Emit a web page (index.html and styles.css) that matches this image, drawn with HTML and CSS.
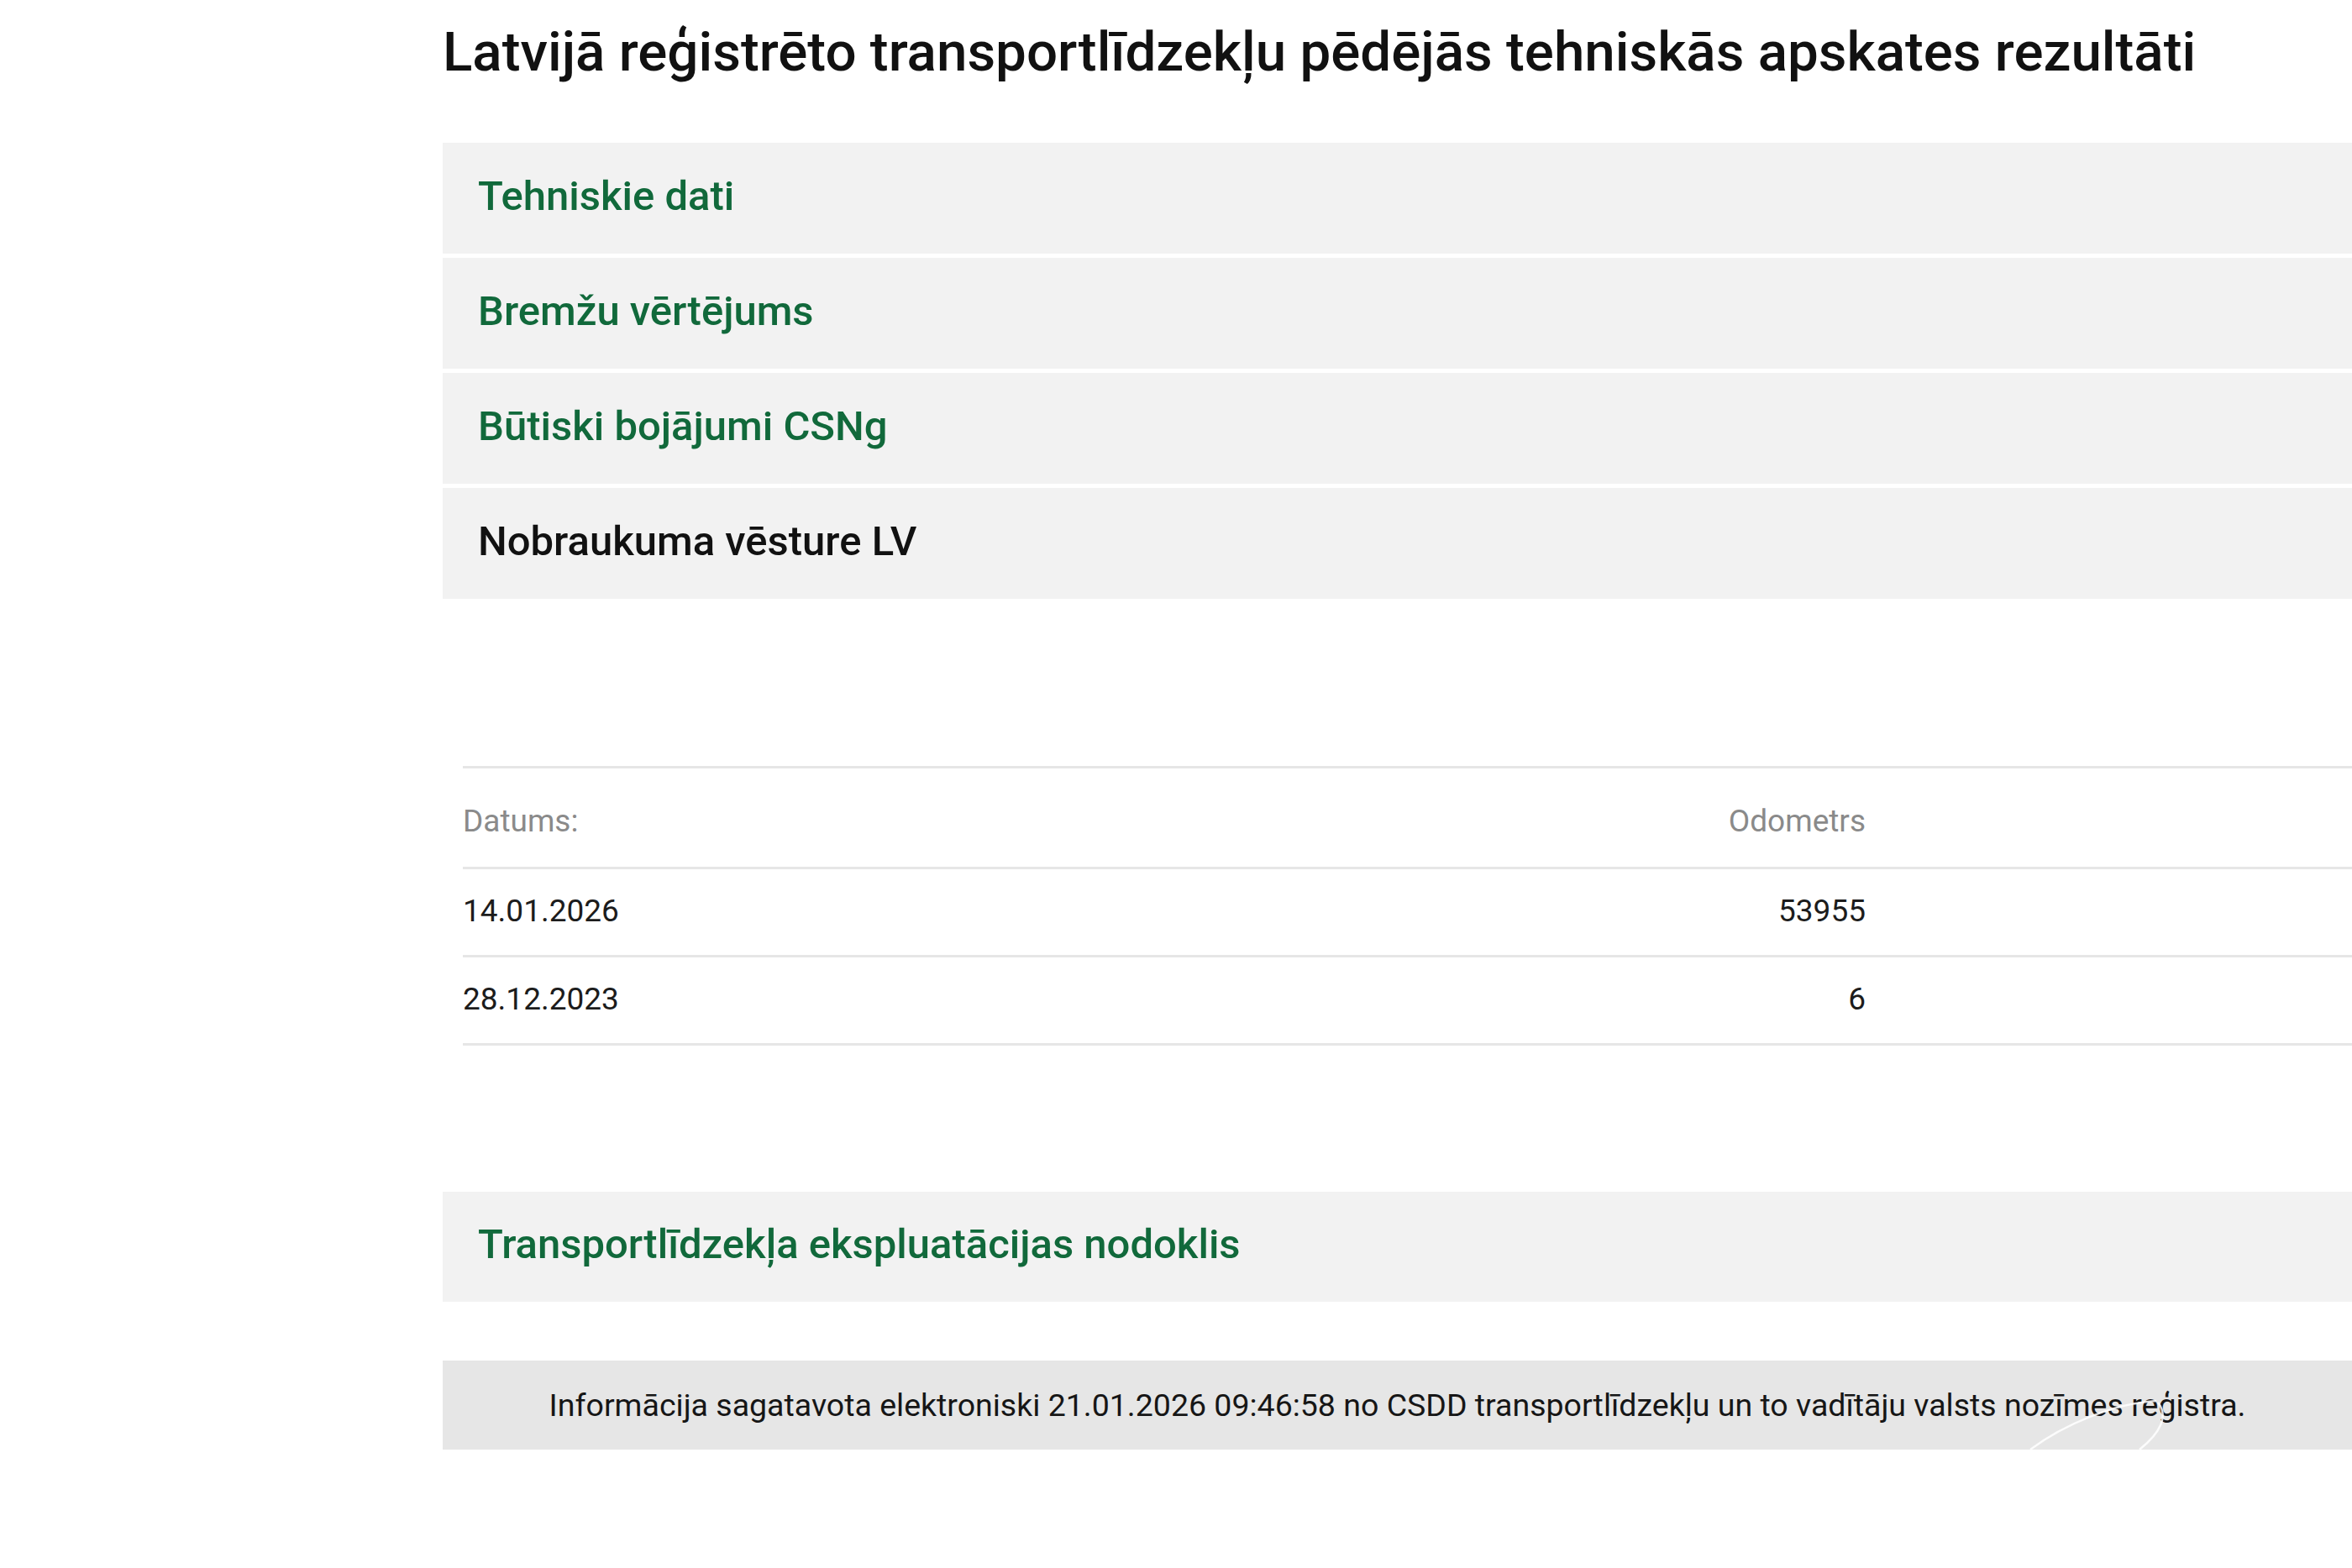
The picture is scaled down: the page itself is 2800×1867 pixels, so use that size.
FILE: index.html
```html
<!DOCTYPE html>
<html lang="lv">
<head>
<meta charset="utf-8">
<title>Tehniskās apskates rezultāti</title>
<link rel="stylesheet" href="styles.css">
</head>
<body>
<main class="container">
  <h1 class="page-title">Latvijā reģistrēto transportlīdzekļu pēdējās tehniskās apskates rezultāti</h1>
  <div class="accordion">
    <div class="acc-item"><span class="acc-label">Tehniskie dati</span></div>
    <div class="acc-item"><span class="acc-label">Bremžu vērtējums</span></div>
    <div class="acc-item"><span class="acc-label">Būtiski bojājumi CSNg</span></div>
    <div class="acc-item acc-open"><span class="acc-label">Nobraukuma vēsture LV</span></div>
  </div>
  <section class="history">
    <div class="hist-table">
      <div class="hist-row hist-head">
        <div class="c-date">Datums:</div>
        <div class="c-odo">Odometrs</div>
        <div class="c-rest"></div>
      </div>
      <div class="hist-row">
        <div class="c-date">14.01.2026</div>
        <div class="c-odo">53955</div>
        <div class="c-rest"></div>
      </div>
      <div class="hist-row">
        <div class="c-date">28.12.2023</div>
        <div class="c-odo">6</div>
        <div class="c-rest"></div>
      </div>
    </div>
  </section>
  <div class="acc-item acc-tax"><span class="acc-label">Transportlīdzekļa ekspluatācijas nodoklis</span></div>
  <footer class="info-box">
    <span class="info-text">Informācija sagatavota elektroniski 21.01.2026 09:46:58 no CSDD transportlīdzekļu un to vadītāju valsts nozīmes reģistra.</span>
    <svg class="watermark" width="200" height="60" viewBox="0 0 200 60" aria-hidden="true">
      <path d="M20 60 C 60 30, 120 5, 170 2" fill="none" stroke="#ffffff" stroke-width="2.5" opacity="0.85"/>
      <path d="M150 60 C 175 40, 185 20, 172 4" fill="none" stroke="#ffffff" stroke-width="2.5" opacity="0.85"/>
    </svg>
  </footer>
</main>
</body>
</html>
```

FILE: styles.css
```css
html, body {
  margin: 0;
  padding: 0;
  background: #ffffff;
  overflow: hidden;
}
body {
  font-family: Roboto, "Liberation Sans", Arial, sans-serif;
  color: #111111;
}
.container {
  margin-left: 527px;
  width: 2273px;
}
.page-title {
  margin: 22px 0 68px 0;
  font-size: 65.5px;
  line-height: 80px;
  font-weight: 500;
  color: #111111;
  white-space: nowrap;
}
.accordion {
  display: flex;
  flex-direction: column;
  gap: 5px;
}
.acc-item {
  height: 132px;
  box-sizing: border-box;
  background: #f2f2f2;
  display: flex;
  align-items: center;
  padding: 0 0 6px 42px;
}
.acc-label {
  font-size: 49px;
  font-weight: 500;
  color: #11693b;
  white-space: nowrap;
}
.acc-open .acc-label {
  color: #111111;
}
.history {
  padding: 199px 0 0 24px;
}
.hist-table {
  border-top: 3px solid #e6e6e6;
}
.hist-row {
  display: grid;
  grid-template-columns: 1400px 270px 1fr;
  align-items: center;
  height: 105px;
  box-sizing: border-box;
  border-bottom: 3px solid #e6e6e6;
  padding-bottom: 3px;
  font-size: 37px;
  color: #1c1c1c;
}
.hist-head {
  height: 120px;
  padding-top: 8px;
  padding-bottom: 0;
  font-size: 37px;
  color: #8a8a8a;
}
.c-odo {
  text-align: right;
}
.acc-tax {
  margin-top: 174px;
  height: 131px;
}
.info-box {
  position: relative;
  margin-top: 70px;
  height: 106px;
  background: #e6e6e6;
  display: flex;
  align-items: center;
  justify-content: center;
}
.info-text {
  font-size: 37.5px;
  color: #161616;
  white-space: nowrap;
}
.watermark {
  position: absolute;
  left: 1870px;
  bottom: 0;
}
```
